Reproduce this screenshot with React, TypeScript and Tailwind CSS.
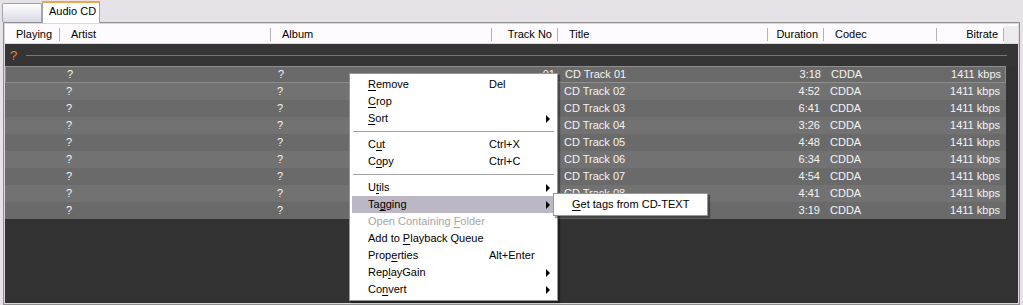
import React from 'react';

type Col = { label: string; w: string; right?: boolean };

const cols: Col[] = [
  { label: 'Playing', w: 'w-[55px]' },
  { label: 'Artist', w: 'w-[211px]' },
  { label: 'Album', w: 'w-[221px]' },
  { label: 'Track No', w: 'w-[66px]', right: true },
  { label: 'Title', w: 'w-[210px]' },
  { label: 'Duration', w: 'w-[56px]', right: true },
  { label: 'Codec', w: 'w-[113px]' },
  { label: 'Bitrate', w: 'w-[67px]', right: true },
];

const durations = ['3:18', '4:52', '6:41', '3:26', '4:48', '6:34', '4:54', '4:41', '3:19'];

type Item =
  | { sep: true }
  | { sep?: false; text: string; u: number; key?: string; sub?: boolean; active?: boolean; disabled?: boolean };

const menu: Item[] = [
  { text: 'Remove', u: 0, key: 'Del' },
  { text: 'Crop', u: 0 },
  { text: 'Sort', u: 0, sub: true },
  { sep: true },
  { text: 'Cut', u: 1, key: 'Ctrl+X' },
  { text: 'Copy', u: 1, key: 'Ctrl+C' },
  { sep: true },
  { text: 'Utils', u: 1, sub: true },
  { text: 'Tagging', u: 2, sub: true, active: true },
  { text: 'Open Containing Folder', u: 16, disabled: true },
  { text: 'Add to Playback Queue', u: 7 },
  { text: 'Properties', u: 4, key: 'Alt+Enter' },
  { text: 'ReplayGain', u: 3, sub: true },
  { text: 'Convert', u: 2, sub: true },
];

function Mnemonic({ text, u }: { text: string; u: number }) {
  return (
    <span>
      {text.slice(0, u)}
      <span className="underline underline-offset-[2px]">{text[u]}</span>
      {text.slice(u + 1)}
    </span>
  );
}

function Arrow() {
  return <span className="h-0 w-0 border-y-[4px] border-l-[4px] border-y-transparent border-l-black" />;
}

export default function App() {
  return (
    <div className="relative flex h-[305px] w-[1023px] flex-col overflow-hidden bg-[#e6e2e8] font-['Liberation_Sans',Arial,sans-serif] text-[11px] text-black">
      {/* tab strip */}
      <div className="flex h-[22px] items-end pl-[2px]">
        <div className="h-[19px] w-[40px] rounded-t-[2px] border border-b-0 border-[#a4a4a8] bg-gradient-to-b from-white to-[#d8d8e6]" />
        <div className="relative z-10 -mb-[1px] flex h-[22px] w-[58px] items-center border-x border-[#a4a4a8] border-t-2 border-t-[#eca64a] bg-white pb-[3px] pl-[6px]">
          Audio CD
        </div>
      </div>

      {/* list frame */}
      <div className="mx-[3px] flex flex-1 flex-col border border-[#8e8e8e] bg-[#d9d9d9] p-[1px]">
        <div className="flex h-[20px] items-center border-b border-[#dcd8e4] bg-[#fdfbfd] pt-[2px]">
          {cols.map((c) => (
            <div key={c.label} className={`${c.w} flex h-full shrink-0 items-center`}>
              <span className={`flex-1 ${c.right ? 'pr-[5px] text-right' : 'pl-[11px]'}`}>{c.label}</span>
              <span className="h-[13px] w-px bg-[#b4b0c0]" />
            </div>
          ))}
          <div className="h-full flex-1 bg-[#ecebee]" />
        </div>

        <div className="flex flex-1 flex-col bg-[#323232]">
          <div className="flex h-[22px] items-center bg-[#353535] pl-[5px] pr-[11px] pt-[1px]">
            <span className="w-[16px] text-[13px] text-[#e8852a]">?</span>
            <span className="h-px flex-1 bg-[#b8681e]" />
          </div>
          <div className="w-[1001px]">
            {durations.map((d, i) => {
              const n = String(i + 1).padStart(2, '0');
              const cells = ['', '?', '?', n, `CD Track ${n}`, d, 'CDDA', '1411 kbps'];
              return (
                <div
                  key={n}
                  className={`flex h-[17px] items-center text-[#f4f4f4] ${i % 2 === 0 ? 'bg-[#6b6a6b]' : 'bg-[#737273]'} ${i === 0 ? 'border border-[#8e8d8e]' : ''}`}
                >
                  {cols.map((c, j) => (
                    <div
                      key={c.label}
                      className={`${c.w} shrink-0 truncate ${c.right ? 'pr-[4px] text-right' : 'pl-[6px]'}`}
                    >
                      {cells[j]}
                    </div>
                  ))}
                </div>
              );
            })}
          </div>
        </div>
      </div>

      {/* context menu */}
      <div className="absolute left-[349px] top-[73px] w-[209px] border border-[#979797] bg-white px-[2px] py-[2px] shadow-[2px_2px_1px_rgba(0,0,0,0.35)]">
        {menu.map((m, i) =>
          m.sep ? (
            <div key={i} className="flex h-[9px] items-center px-[1px]">
              <div className="h-px w-full bg-[#a0a0a0]" />
            </div>
          ) : (
            <div
              key={i}
              className={`flex h-[17px] items-center pl-[16px] pr-[5px] ${m.active ? 'bg-[#bbb7c5]' : ''} ${m.disabled ? 'text-[#a6a6a6]' : ''}`}
            >
              <span className="w-[121px] shrink-0 whitespace-nowrap">
                <Mnemonic text={m.text} u={m.u} />
              </span>
              <span className="flex-1">{m.key}</span>
              {m.sub && <Arrow />}
            </div>
          )
        )}
      </div>

      {/* submenu */}
      <div className="absolute left-[553px] top-[193px] w-[155px] border border-[#979797] bg-white p-[2px] shadow-[2px_2px_1px_rgba(0,0,0,0.35)]">
        <div className="flex h-[17px] items-center pl-[16px]">
          <Mnemonic text="Get tags from CD-TEXT" u={0} />
        </div>
      </div>
    </div>
  );
}
